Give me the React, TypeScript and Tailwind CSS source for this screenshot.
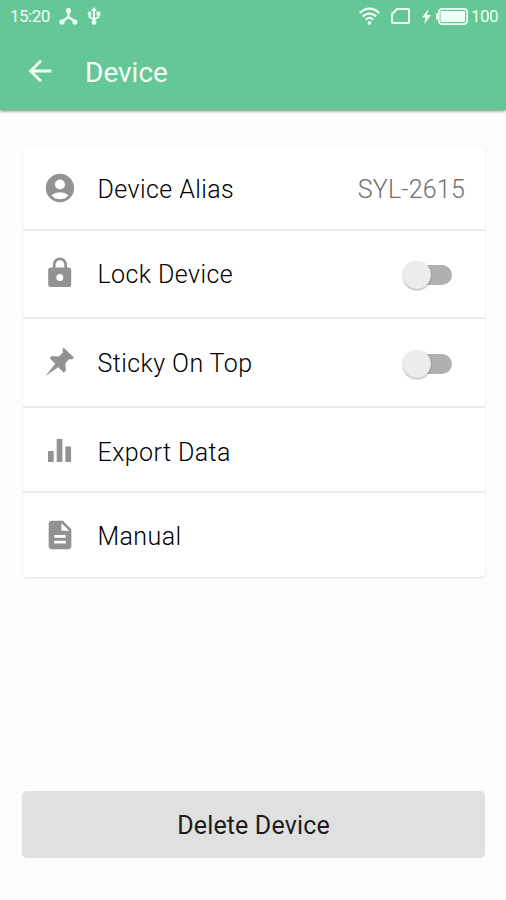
import type { ReactNode } from "react";
import { MdAccountCircle, MdArrowBack, MdDescription } from "react-icons/md";

function StatusBar() {
  return (
    <div className="flex h-8 items-center pl-[10px] pr-2 text-[17px] leading-8 text-[#eefff5]">
      <span className="w-[49px] tracking-[-0.5px]">15:20</span>
      <svg className="h-[17px] w-[19px]" viewBox="0 0 19 17" fill="none" stroke="currentColor" strokeWidth="2.4">
        <path d="M9.5 3v6L3 13.5M9.5 9l6.5 4.5" />
        <g fill="currentColor" stroke="none">
          <circle cx="9.5" cy="2.7" r="2.6" />
          <circle cx="3" cy="14" r="2.6" />
          <circle cx="16" cy="14" r="2.6" />
        </g>
      </svg>
      <svg className="ml-[9px] h-[18px] w-[14px]" viewBox="0 0 14 18" fill="none" stroke="currentColor" strokeWidth="2">
        <path d="M7 2v14M2.6 6v4L7 12.5M11.4 6v4L7 12.5" />
        <g fill="currentColor" stroke="none">
          <path d="M7 0l2.8 4H4.2z" />
          <circle cx="7" cy="15.4" r="2.4" />
          <circle cx="2.6" cy="6.5" r="2" />
          <path d="M9.5 4.6h3.8v3.8H9.5z" />
        </g>
      </svg>

      <div className="ml-auto flex items-center">
        <svg className="h-[18px] w-[21px]" viewBox="0 0 21 18" fill="none" stroke="currentColor" strokeWidth="2.2">
          <path d="M0.8 6.2C6.5 0.2 14.5 0.2 20.2 6.2M3.8 9.5c4-4 9.4-4 13.4 0M6.8 12.7c2.3-2.2 5.1-2.2 7.4 0" />
          <circle cx="10.5" cy="15.8" r="1.9" fill="currentColor" stroke="none" />
        </svg>
        <svg className="ml-[11px] h-4 w-[19px]" viewBox="0 0 19 16" fill="none" stroke="currentColor" strokeWidth="2">
          <path d="M6 1h11a1 1 0 0 1 1 1v12a1 1 0 0 1-1 1H2a1 1 0 0 1-1-1V6z" />
        </svg>
        <svg className="ml-3 h-[15px] w-[9px]" viewBox="0 0 9 15" fill="currentColor">
          <path d="M6.5 0L0 8.5h3.5L2.3 15 9 6H5z" />
        </svg>
        <svg className="ml-[5px] h-[17px] w-8" viewBox="0 0 32 17" fill="none" stroke="currentColor">
          <rect x="2.8" y="0.9" width="28.4" height="15.2" rx="3.5" strokeWidth="1.8" />
          <rect x="4.5" y="3" width="24.5" height="11" rx="1" fill="currentColor" stroke="none" />
          <path d="M1 5.5v6" strokeWidth="2" />
        </svg>
        <span className="ml-[3px] w-[27px] tracking-[-0.5px]">100</span>
      </div>
    </div>
  );
}

function LockIcon() {
  return (
    <svg className="h-[34px] w-[34px]" viewBox="0 0 34 34">
      <path d="M11.2 13V8.500a5.700 5.700 0 0 1 11.400 0V13" fill="none" stroke="currentColor" strokeWidth="2.7" />
      <path
        fill="currentColor"
        fillRule="evenodd"
        d="M7.7 11.500h18a2.500 2.500 0 0 1 2.500 2.500v14.500a2.500 2.500 0 0 1-2.500 2.500h-18a2.500 2.500 0 0 1-2.500-2.500V14a2.500 2.500 0 0 1 2.500-2.500zM16.800 18a3.500 3.500 0 1 0 0 7 3.500 3.500 0 0 0 0-7z"
      />
    </svg>
  );
}

function PinIcon() {
  return (
    <svg className="h-[34px] w-[34px]" viewBox="0 0 34 34" fill="currentColor">
      <path d="M20.500 2.500L31 12.600l-2 1.800-2.700-.5-3.900 4.600.5 7.100-2.100 2.200-5.600-5.500L2.500 31l9.700-12.200-5.500-5.500 2.200-2.200 7 .5 4.100-4-.6-2.900z" />
    </svg>
  );
}

function ChartIcon() {
  return (
    <svg className="h-[34px] w-[34px]" viewBox="0 0 34 34" fill="currentColor">
      <path d="M5 17h5.700v11H5zM13.700 5h5.700v23h-5.700zM22.400 12.500h5.700V28h-5.700z" />
    </svg>
  );
}

function Toggle() {
  return (
    <div className="relative mr-[13px] h-5 w-[49px]">
      <div className="ml-[9px] h-5 w-10 rounded-full bg-[#b0b0b0]" />
      <div className="absolute -top-1 left-0 h-7 w-7 rounded-full bg-[#ececec] shadow-[0_1px_2px_rgba(0,0,0,0.35)]" />
    </div>
  );
}

type RowProps = { icon: ReactNode; label: string; height: string; children?: ReactNode };

function Row({ icon, label, height, children }: RowProps) {
  return (
    <div className={`flex items-center border-b-2 border-[#ebebeb] pl-[19.5px] pr-5 last:border-b-0 ${height}`}>
      <span className="mb-1 mr-[21px] text-[#929292]">{icon}</span>
      <span className="flex-1 text-[25px] font-light leading-8 tracking-[0.42px] text-black">{label}</span>
      {children}
    </div>
  );
}

export default function App() {
  return (
    <div className="flex h-[900px] w-[506px] flex-col bg-[#fcfcfc] font-[Roboto,sans-serif]">
      <header className="h-[110px] bg-[#66c796] shadow-[0_1px_3px_rgba(0,0,0,0.5)]">
        <StatusBar />
        <div className="flex h-20 items-center pl-[23px] pt-[2px] text-[#f4fff8]">
          <MdArrowBack className="mb-[4px] size-[34px]" />
          <h1 className="ml-[28px] text-[28px] leading-9">Device</h1>
        </div>
      </header>

      <main className="flex flex-1 flex-col pb-[42px] pl-[22px] pr-5 pt-[37px]">
        <div className="ml-px mr-px rounded-[4px] bg-white shadow-[0_1px_2px_rgba(0,0,0,0.13)]">
          <Row icon={<MdAccountCircle size={34} />} label="Device Alias" height="h-[84px] pt-[3px]">
            <span className="text-[25px] font-light leading-8 tracking-[0.2px] text-[#707070]">SYL-2615</span>
          </Row>
          <Row icon={<LockIcon />} label="Lock Device" height="h-[88px] pt-[2px]">
            <Toggle />
          </Row>
          <Row icon={<PinIcon />} label="Sticky On Top" height="h-[89px] pt-[2px]">
            <Toggle />
          </Row>
          <Row icon={<ChartIcon />} label="Export Data" height="h-[85px] pt-[6px]" />
          <Row icon={<MdDescription size={34} />} label="Manual" height="h-[84px] pt-[4px]" />
        </div>

        <button className="mr-px mt-auto h-[67px] rounded-[5px] bg-[#e0e0e0] pt-[3px] text-[25px] tracking-[0.15px] text-[#1c1c1c]">
          Delete Device
        </button>
      </main>
    </div>
  );
}
